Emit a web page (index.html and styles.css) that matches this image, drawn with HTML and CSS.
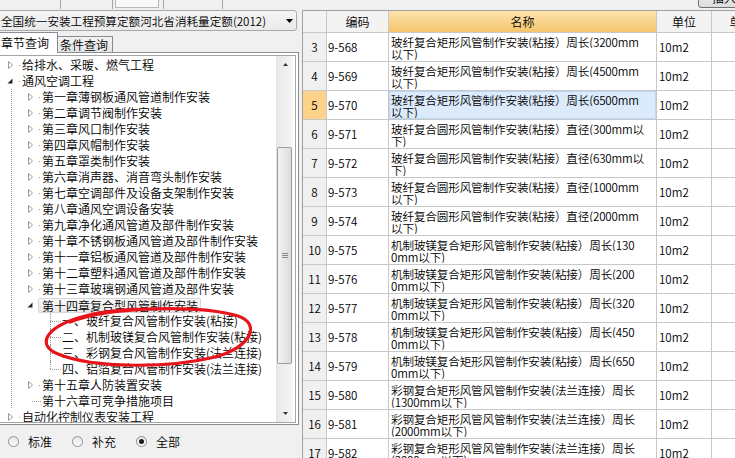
FILE: index.html
```html
<!DOCTYPE html>
<html lang="zh-CN">
<head>
<meta charset="utf-8">
<title>定额查询</title>
<link rel="stylesheet" href="styles.css">
</head>
<body>
<div class="app">
  <div class="toolbar">
    <span class="tb-sp" style="width:60px"></span><span class="tb-line"></span>
    <span class="tb-sp" style="width:51px"></span><span class="tb-line"></span>
    <span class="tb-sp" style="width:2px"></span><span class="tb-box"></span>
    <span class="tb-sp" style="width:4px"></span><span class="tb-line"></span>
    <span class="tb-sp" style="width:58px"></span><span class="tb-line"></span>
    <span class="tb-fill"></span>
    <span class="tb-btn">插入</span>
  </div>
  <div class="main">
    <div class="left">
      <div class="combo">
        <span class="combo-text">全国统一安装工程预算定额河北省消耗量定额(2012)</span>
        <svg class="combo-arrow" width="7" height="4" viewBox="0 0 7 4"><path d="M0 0H7L3.5 4Z" fill="#000"/></svg>
      </div>
      <div class="tabs">
        <span class="tab active">章节查询</span>
        <span class="tab">条件查询</span>
        <span class="tab-fill"></span>
      </div>
      <div class="panel">
        <div class="treebox">
          <div class="tree">
            <div class="row"><span class="exp"><svg width="5" height="8" viewBox="0 0 5 8"><path d="M0.5 0.5L4.5 4L0.5 7.5Z" fill="#fff" stroke="#9a9a9a"/></svg></span><span class="dot"></span><span class="txt">给排水、采暖、燃气工程</span></div>
            <div class="row"><span class="exp"><svg width="6" height="6" viewBox="0 0 6 6"><path d="M5.5 0.5V5.5H0.5Z" fill="#262626"/></svg></span><span class="dot"></span><span class="txt">通风空调工程</span></div>
            <div class="row"><span class="guide"></span><span class="exp"><svg width="5" height="8" viewBox="0 0 5 8"><path d="M0.5 0.5L4.5 4L0.5 7.5Z" fill="#fff" stroke="#9a9a9a"/></svg></span><span class="dot"></span><span class="txt">第一章薄钢板通风管道制作安装</span></div>
            <div class="row"><span class="guide"></span><span class="exp"><svg width="5" height="8" viewBox="0 0 5 8"><path d="M0.5 0.5L4.5 4L0.5 7.5Z" fill="#fff" stroke="#9a9a9a"/></svg></span><span class="dot"></span><span class="txt">第二章调节阀制作安装</span></div>
            <div class="row"><span class="guide"></span><span class="exp"><svg width="5" height="8" viewBox="0 0 5 8"><path d="M0.5 0.5L4.5 4L0.5 7.5Z" fill="#fff" stroke="#9a9a9a"/></svg></span><span class="dot"></span><span class="txt">第三章风口制作安装</span></div>
            <div class="row"><span class="guide"></span><span class="exp"><svg width="5" height="8" viewBox="0 0 5 8"><path d="M0.5 0.5L4.5 4L0.5 7.5Z" fill="#fff" stroke="#9a9a9a"/></svg></span><span class="dot"></span><span class="txt">第四章风帽制作安装</span></div>
            <div class="row"><span class="guide"></span><span class="exp"><svg width="5" height="8" viewBox="0 0 5 8"><path d="M0.5 0.5L4.5 4L0.5 7.5Z" fill="#fff" stroke="#9a9a9a"/></svg></span><span class="dot"></span><span class="txt">第五章罩类制作安装</span></div>
            <div class="row"><span class="guide"></span><span class="exp"><svg width="5" height="8" viewBox="0 0 5 8"><path d="M0.5 0.5L4.5 4L0.5 7.5Z" fill="#fff" stroke="#9a9a9a"/></svg></span><span class="dot"></span><span class="txt">第六章消声器、消音弯头制作安装</span></div>
            <div class="row"><span class="guide"></span><span class="exp"><svg width="5" height="8" viewBox="0 0 5 8"><path d="M0.5 0.5L4.5 4L0.5 7.5Z" fill="#fff" stroke="#9a9a9a"/></svg></span><span class="dot"></span><span class="txt">第七章空调部件及设备支架制作安装</span></div>
            <div class="row"><span class="guide"></span><span class="exp"><svg width="5" height="8" viewBox="0 0 5 8"><path d="M0.5 0.5L4.5 4L0.5 7.5Z" fill="#fff" stroke="#9a9a9a"/></svg></span><span class="dot"></span><span class="txt">第八章通风空调设备安装</span></div>
            <div class="row"><span class="guide"></span><span class="exp"><svg width="5" height="8" viewBox="0 0 5 8"><path d="M0.5 0.5L4.5 4L0.5 7.5Z" fill="#fff" stroke="#9a9a9a"/></svg></span><span class="dot"></span><span class="txt">第九章净化通风管道及部件制作安装</span></div>
            <div class="row"><span class="guide"></span><span class="exp"><svg width="5" height="8" viewBox="0 0 5 8"><path d="M0.5 0.5L4.5 4L0.5 7.5Z" fill="#fff" stroke="#9a9a9a"/></svg></span><span class="dot"></span><span class="txt">第十章不锈钢板通风管道及部件制作安装</span></div>
            <div class="row"><span class="guide"></span><span class="exp"><svg width="5" height="8" viewBox="0 0 5 8"><path d="M0.5 0.5L4.5 4L0.5 7.5Z" fill="#fff" stroke="#9a9a9a"/></svg></span><span class="dot"></span><span class="txt">第十一章铝板通风管道及部件制作安装</span></div>
            <div class="row"><span class="guide"></span><span class="exp"><svg width="5" height="8" viewBox="0 0 5 8"><path d="M0.5 0.5L4.5 4L0.5 7.5Z" fill="#fff" stroke="#9a9a9a"/></svg></span><span class="dot"></span><span class="txt">第十二章塑料通风管道及部件制作安装</span></div>
            <div class="row"><span class="guide"></span><span class="exp"><svg width="5" height="8" viewBox="0 0 5 8"><path d="M0.5 0.5L4.5 4L0.5 7.5Z" fill="#fff" stroke="#9a9a9a"/></svg></span><span class="dot"></span><span class="txt">第十三章玻璃钢通风管道及部件安装</span></div>
            <div class="row"><span class="guide"></span><span class="exp"><svg width="6" height="6" viewBox="0 0 6 6"><path d="M5.5 0.5V5.5H0.5Z" fill="#262626"/></svg></span><span class="txt sel">第十四章复合型风管制作安装</span></div>
            <div class="row"><span class="guide"></span><span class="blank"></span><span class="leaf"><span class="l-top"></span><span class="l-bot"></span></span><span class="txt">一、玻纤复合风管制作安装(粘接)</span></div>
            <div class="row"><span class="guide"></span><span class="blank"></span><span class="leaf"><span class="l-top"></span><span class="l-bot"></span></span><span class="txt">二、机制玻镁复合风管制作安装(粘接)</span></div>
            <div class="row"><span class="guide"></span><span class="blank"></span><span class="leaf"><span class="l-top"></span><span class="l-bot"></span></span><span class="txt">三、彩钢复合风管制作安装(法兰连接)</span></div>
            <div class="row"><span class="guide"></span><span class="blank"></span><span class="leaf last"><span class="l-top"></span><span class="l-bot"></span></span><span class="txt">四、铝箔复合风管制作安装(法兰连接)</span></div>
            <div class="row"><span class="guide"></span><span class="exp"><svg width="5" height="8" viewBox="0 0 5 8"><path d="M0.5 0.5L4.5 4L0.5 7.5Z" fill="#fff" stroke="#9a9a9a"/></svg></span><span class="dot"></span><span class="txt">第十五章人防装置安装</span></div>
            <div class="row"><span class="guide"></span><span class="leaf1"><span class="l-top"></span><span class="l-bot"></span></span><span class="txt">第十六章可竞争措施项目</span></div>
            <div class="row"><span class="exp"><svg width="5" height="8" viewBox="0 0 5 8"><path d="M0.5 0.5L4.5 4L0.5 7.5Z" fill="#fff" stroke="#9a9a9a"/></svg></span><span class="dot"></span><span class="txt">自动化控制仪表安装工程</span></div>
          </div>
          <div class="vscroll">
            <div class="sb-btn"><svg width="5" height="3" viewBox="0 0 5 3"><path d="M2.5 0L5 3H0Z" fill="#333"/></svg></div>
            <div class="sb-track">
              <div class="sb-thumb"><span class="grip"></span></div>
            </div>
            <div class="sb-btn"><svg width="5" height="3" viewBox="0 0 5 3"><path d="M0 0H5L2.5 3Z" fill="#333"/></svg></div>
          </div>
        </div>
      </div>
      <div class="radios">
        <span class="radio"></span><span class="rlabel">标准</span>
        <span class="radio"></span><span class="rlabel">补充</span>
        <span class="radio checked"></span><span class="rlabel">全部</span>
      </div>
    </div>
    <div class="right">
      <div class="grid">
        <div class="c hd"></div><div class="c hd">编码</div><div class="c hd hot">名称</div><div class="c hd">单位</div><div class="c hd lastc">单价</div>

        <div class="c rh">3</div><div class="c code">9-568</div><div class="c name"><span>玻纤复合矩形风管制作安装(粘接）周长(3200mm</span><span>以下)</span></div><div class="c unit">10m2</div><div class="c lastc"></div>
        <div class="c rh">4</div><div class="c code">9-569</div><div class="c name"><span>玻纤复合矩形风管制作安装(粘接）周长(4500mm</span><span>以下)</span></div><div class="c unit">10m2</div><div class="c lastc"></div>
        <div class="c rh cur">5</div><div class="c code">9-570</div><div class="c name selc"><span>玻纤复合矩形风管制作安装(粘接）周长(6500mm</span><span>以下)</span></div><div class="c unit">10m2</div><div class="c lastc"></div>
        <div class="c rh">6</div><div class="c code">9-571</div><div class="c name"><span>玻纤复合圆形风管制作安装(粘接）直径(300mm以</span><span>下)</span></div><div class="c unit">10m2</div><div class="c lastc"></div>
        <div class="c rh">7</div><div class="c code">9-572</div><div class="c name"><span>玻纤复合圆形风管制作安装(粘接）直径(630mm以</span><span>下)</span></div><div class="c unit">10m2</div><div class="c lastc"></div>
        <div class="c rh">8</div><div class="c code">9-573</div><div class="c name"><span>玻纤复合圆形风管制作安装(粘接）直径(1000mm</span><span>以下)</span></div><div class="c unit">10m2</div><div class="c lastc"></div>
        <div class="c rh">9</div><div class="c code">9-574</div><div class="c name"><span>玻纤复合圆形风管制作安装(粘接）直径(2000mm</span><span>以下)</span></div><div class="c unit">10m2</div><div class="c lastc"></div>
        <div class="c rh">10</div><div class="c code">9-575</div><div class="c name"><span>机制玻镁复合矩形风管制作安装(粘接）周长(130</span><span>0mm以下)</span></div><div class="c unit">10m2</div><div class="c lastc"></div>
        <div class="c rh">11</div><div class="c code">9-576</div><div class="c name"><span>机制玻镁复合矩形风管制作安装(粘接）周长(200</span><span>0mm以下)</span></div><div class="c unit">10m2</div><div class="c lastc"></div>
        <div class="c rh">12</div><div class="c code">9-577</div><div class="c name"><span>机制玻镁复合矩形风管制作安装(粘接）周长(320</span><span>0mm以下)</span></div><div class="c unit">10m2</div><div class="c lastc"></div>
        <div class="c rh">13</div><div class="c code">9-578</div><div class="c name"><span>机制玻镁复合矩形风管制作安装(粘接）周长(450</span><span>0mm以下)</span></div><div class="c unit">10m2</div><div class="c lastc"></div>
        <div class="c rh">14</div><div class="c code">9-579</div><div class="c name"><span>机制玻镁复合矩形风管制作安装(粘接）周长(650</span><span>0mm以下)</span></div><div class="c unit">10m2</div><div class="c lastc"></div>
        <div class="c rh">15</div><div class="c code">9-580</div><div class="c name"><span>彩钢复合矩形风管风管制作安装(法兰连接）周长</span><span>(1300mm以下)</span></div><div class="c unit">10m2</div><div class="c lastc"></div>
        <div class="c rh">16</div><div class="c code">9-581</div><div class="c name"><span>彩钢复合矩形风管风管制作安装(法兰连接）周长</span><span>(2000mm以下)</span></div><div class="c unit">10m2</div><div class="c lastc"></div>
        <div class="c rh">17</div><div class="c code">9-582</div><div class="c name"><span>彩钢复合矩形风管风管制作安装(法兰连接）周长</span><span>(3000mm以下)</span></div><div class="c unit">10m2</div><div class="c lastc"></div>
      </div>
    </div>
  </div>
  <svg class="annot" width="735" height="458" viewBox="0 0 735 458">
    <path d="M70 322 C 110 306, 200 305, 238 316 C 262 324, 250 348, 215 357 C 170 368, 95 369, 58 354 C 36 345, 46 328, 78 318 C 100 311, 130 309, 150 309" fill="none" stroke="#e8141c" stroke-width="3.2" stroke-linecap="round"/>
  </svg>
</div>
</body>
</html>
```

FILE: styles.css
```css
* { box-sizing: border-box; }

html, body {
  margin: 0;
  padding: 0;
}

body {
  background: #f0f0f0;
  font-family: "Noto Sans CJK SC", "Noto Sans", sans-serif;
  font-size: 12px;
  font-weight: 350;
  color: #000;
}

.app {
  position: relative;
  width: 735px;
  height: 458px;
  overflow: hidden;
  display: flex;
  flex-direction: column;
}

/* top toolbar remnant */
.toolbar {
  height: 10px;
  flex: none;
  display: flex;
  align-items: flex-start;
}
.tb-sp { flex: none; height: 1px; }
.tb-line { flex: none; width: 1px; height: 9px; background: #a7a7a7; }
.tb-box {
  flex: none;
  width: 44px;
  height: 8px;
  border: 1px solid #b9b9b9;
  border-top: none;
  background: #f9f9f9;
}
.tb-fill { flex: 1; }
.tb-btn {
  flex: none;
  width: 50px;
  height: 21px;
  margin-top: -13px;
  margin-right: -13px;
  padding-left: 13px;
  border: 1px solid #707070;
  border-radius: 3px;
  background: linear-gradient(#f2f2f2, #dddddd);
  line-height: 19px;
  font-size: 12px;
  white-space: nowrap;
  overflow: hidden;
}

.main {
  flex: 1;
  min-height: 0;
  display: flex;
}

/* left pane */
.left {
  flex: none;
  width: 303px;
  margin-left: -3px;
  display: flex;
  flex-direction: column;
}

.combo {
  flex: none;
  height: 21px;
  margin-right: 3px;
  border: 1px solid #a9a9a9;
  border-radius: 3px;
  background: linear-gradient(#f4f4f4, #ebebeb);
  display: flex;
  align-items: center;
  padding-left: 3px;
  padding-right: 3px;
}
.combo-text {
  flex: 1;
  font-size: 11.6px;
  white-space: nowrap;
  overflow: hidden;
}
.combo-arrow { flex: none; }

.tabs {
  flex: none;
  height: 22px;
  margin-right: 1px;
  display: flex;
  align-items: flex-end;
}
.tab {
  flex: none;
  white-space: nowrap;
}
.tab.active {
  width: 61px;
  height: 21px;
  padding-left: 3px;
  border: 1px solid #898c95;
  border-bottom: none;
  background: #fff;
  line-height: 19px;
}
.tab:not(.active) {
  width: 55px;
  height: 17px;
  padding-left: 2px;
  border: 1px solid #898c95;
  border-left: none;
  background: linear-gradient(#f2f2f2, #e4e4e4);
  line-height: 15px;
}
.tab-fill {
  flex: 1;
  height: 1px;
  background: #898c95;
}

.panel {
  flex: 1;
  min-height: 0;
  margin-right: 1px;
  border-right: 1px solid #898c95;
  border-bottom: 1px solid #898c95;
  background: #fff;
  padding: 2px 2px 1px 2px;
  display: flex;
}
.treebox {
  flex: 1;
  min-height: 0;
  border: 1px solid #a4a4a4;
  background: #fff;
  display: flex;
}

.tree {
  flex: 1;
  min-width: 0;
  padding: 1px 0 0 1px;
  overflow: hidden;
}
.row {
  display: flex;
  align-items: center;
  height: 16px;
  white-space: nowrap;
}
.exp {
  flex: none;
  width: 18px;
  height: 16px;
  display: flex;
  align-items: center;
  justify-content: center;
}
.dot {
  flex: none;
  width: 1px;
  height: 1px;
  background: #a0a0a0;
  margin-right: 2px;
}
.txt { line-height: 16px; }
.txt.sel {
  margin-left: -1px;
  height: 15px;
  line-height: 13px;
  padding: 0 2px 0 3px;
  border: 1px solid #d6d6d6;
  border-radius: 2px;
  background: linear-gradient(#fafafa, #e9e9e9);
}
.guide {
  flex: none;
  width: 20px;
  height: 16px;
  background-image: linear-gradient(#9a9a9a 50%, transparent 50%);
  background-size: 1px 2px;
  background-position: 10px 0;
  background-repeat: repeat-y;
}
.blank { flex: none; width: 20px; }
.leaf, .leaf1 {
  flex: none;
  width: 20px;
  height: 16px;
  margin-right: 1px;
  display: flex;
  flex-direction: column;
}
.leaf { padding-left: 9px; }
.leaf1 { padding-left: 11px; }
.l-top { height: 8px; }
.l-bot { height: 8px; border-top: 1px dotted #9a9a9a; }
.leaf .l-top, .leaf .l-bot { border-left: 1px dotted #9a9a9a; }
.leaf.last .l-bot { border-left: none; }

/* scrollbar */
.vscroll {
  flex: none;
  width: 17px;
  margin-right: 2px;
  display: flex;
  flex-direction: column;
  background: linear-gradient(to right, #e9e9e9, #f5f5f5);
  border-left: 1px solid #e2e2e2;
}
.sb-btn {
  flex: none;
  height: 17px;
  display: flex;
  align-items: center;
  justify-content: center;
}
.sb-track {
  flex: 1;
  padding-top: 74px;
}
.sb-thumb {
  width: 15px;
  height: 217px;
  border: 1px solid #9c9c9c;
  border-radius: 2px;
  background: linear-gradient(to right, #f3f3f3, #dcdcdc);
  display: flex;
  align-items: center;
  justify-content: center;
}
.grip {
  width: 6px;
  height: 5px;
  background: linear-gradient(#8a8a8a 1px, transparent 1px) 0 0 / 6px 2px repeat-y;
}

/* radios */
.radios {
  flex: none;
  height: 33px;
  padding-left: 11px;
  display: flex;
  align-items: center;
  background: #f0f0f0;
}
.radio {
  flex: none;
  width: 11px;
  height: 11px;
  border: 1px solid #8e8f8f;
  border-radius: 50%;
  background: linear-gradient(#e6e6e6, #fdfdfd);
  display: flex;
  align-items: center;
  justify-content: center;
}
.radio.checked::after {
  content: "";
  width: 5px;
  height: 5px;
  border-radius: 50%;
  background: #1c1c1c;
}
.rlabel {
  margin-left: 9px;
  margin-right: 20px;
  font-size: 12px;
  line-height: 16px;
}

/* right grid */
.right {
  flex: 1;
  min-width: 0;
  padding-left: 2px;
  overflow: hidden;
}
.grid {
  display: grid;
  grid-template-columns: 24px 62px 268px 55px 60px;
  grid-template-rows: 22px;
  grid-auto-rows: 29px;
  border-top: 1px solid #a0a0a0;
  border-left: 1px solid #a0a0a0;
  background: #fff;
  font-size: 11.6px;
  width: max-content;
}
.c {
  border-right: 1px solid #c8c8c8;
  border-bottom: 1px solid #c8c8c8;
  white-space: nowrap;
  overflow: hidden;
}
.hd {
  background: #f3f3f3;
  display: flex;
  align-items: center;
  justify-content: center;
  font-size: 12px;
}
.hd.hot {
  background: linear-gradient(#fce4ae, #f4c46a);
}
.rh {
  background: #f0f0f0;
  display: flex;
  align-items: center;
  justify-content: center;
}
.rh.cur { background: #fdd38b; }
.code, .unit {
  display: flex;
  align-items: center;
  padding-left: 1px;
}
.unit { padding-left: 2px; }
.name {
  padding: 3px 0 0 2px;
  line-height: 12px;
}
.name span {
  display: block;
  white-space: nowrap;
  overflow: hidden;
  letter-spacing: -0.15px;
}
.name.selc {
  background: #dcebfc;
  box-shadow: inset 0 0 0 1px #bcd6f3;
}

/* annotation */
.annot {
  position: absolute;
  left: 0;
  top: 0;
  pointer-events: none;
}
```
